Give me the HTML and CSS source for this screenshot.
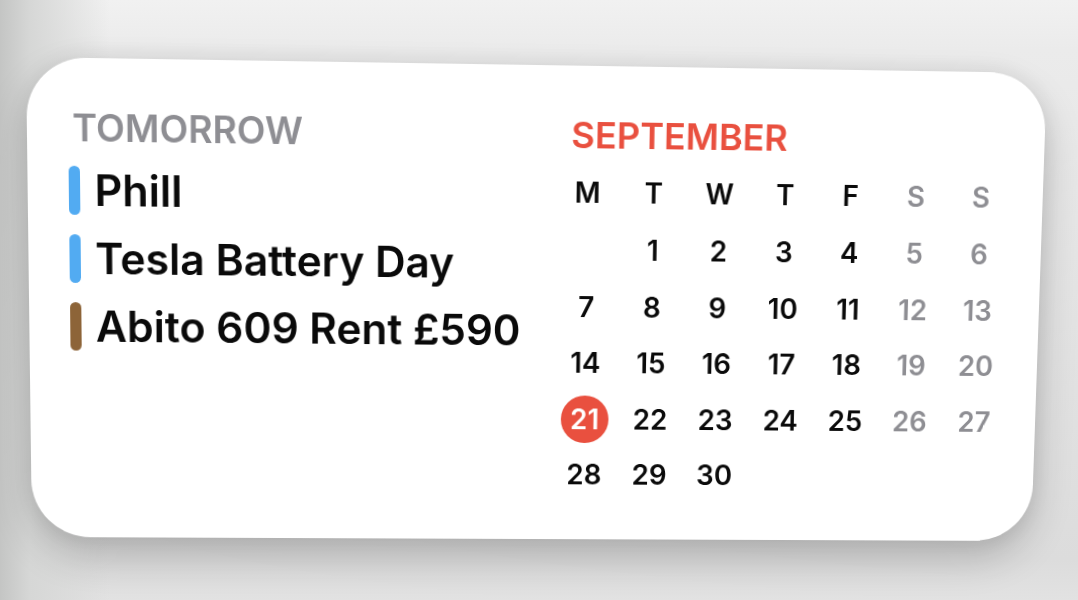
FILE: index.html
```html
<!DOCTYPE html>
<html lang="en">

<head>
    <meta charset="UTF-8">
    <meta name="viewport" content="width=device-width, initial-scale=1.0">
    <title>Calendar widget</title>
    <link rel="stylesheet" href="styles.css">
</head>

<body>
    <div class="widget">
        <section class="agenda">
            <p class="label">TOMORROW</p>
            <ul class="events">
                <li class="event"><span class="bar blue"></span><span class="title">Phill</span></li>
                <li class="event"><span class="bar blue"></span><span class="title">Tesla Battery Day</span></li>
                <li class="event"><span class="bar brown"></span><span class="title">Abito 609 Rent £590</span></li>
            </ul>
        </section>
        <section class="month">
            <p class="month-name">SEPTEMBER</p>
            <div class="weekdays">
                <span>M</span><span>T</span><span>W</span><span>T</span><span>F</span><span>S</span><span>S</span>
            </div>
            <div class="days">
                <span></span><span>1</span><span>2</span><span>3</span><span>4</span><span>5</span><span>6</span>
                <span>7</span><span>8</span><span>9</span><span>10</span><span>11</span><span>12</span><span>13</span>
                <span>14</span><span>15</span><span>16</span><span>17</span><span>18</span><span>19</span><span>20</span>
                <span class="today">21</span><span>22</span><span>23</span><span>24</span><span>25</span><span>26</span><span>27</span>
                <span>28</span><span>29</span><span>30</span>
            </div>
        </section>
    </div>
</body>

</html>
```

FILE: styles.css
```css
html {
    font-family: Inter, "Noto Sans", sans-serif;
}

body {
    margin: 0;
    height: 600px;
    overflow: hidden;
    background:
        linear-gradient(to right, #c4c5c4 0, #d6d7d6 30px, rgba(220, 220, 220, 0) 110px),
        linear-gradient(#f1f1f1 0, #ebebeb 50px, #dcdcdc 560px, #e2e2e2 600px);
}

/* the widget is photographed at a slight angle, so the flat card is warped
   onto the quad seen in the shot */
.widget {
    box-sizing: border-box;
    width: 1010px;
    height: 474px;
    margin: 57px 0 0 26px;
    padding: 50px 30px 0 40px;
    display: flex;
    background: #fff;
    border-radius: 58px;
    box-shadow: 0 18px 40px rgba(0, 0, 0, 0.2), 0 0 26px rgba(0, 0, 0, 0.08);
    transform-origin: 0 0;
    transform: matrix3d(1.036614, 0.016245, 0, 0.0000252,
                        0.012942, 1.035371, 0, 0.0000473,
                        0, 0, 1, 0,
                        0, 0, 0, 1);
}

.agenda {
    flex: 1;
}

.label {
    margin: 0 0 0 4px;
    font-size: 36.5px;
    line-height: 36px;
    font-weight: 600;
    color: #8e8e93;
}

.events {
    list-style: none;
    margin: 19px 0 0;
    padding: 0;
    display: flex;
    flex-direction: column;
    gap: 19px;
}

.event {
    display: flex;
    align-items: center;
    gap: 14px;
    height: 48px;
}

.bar {
    width: 11px;
    height: 48px;
    border-radius: 6px;
}

.bar.blue {
    background-color: #52abf2;
}

.bar.brown {
    background-color: #8d6438;
}

.title {
    font-size: 42px;
    line-height: 48px;
    font-weight: 600;
    color: #0a0a0a;
    white-space: nowrap;
}

.month {
    width: 462px;
}

.month-name {
    margin: 0;
    padding-left: 16px;
    font-size: 36px;
    line-height: 36px;
    font-weight: 600;
    color: #e9503f;
}

.weekdays, .days {
    display: grid;
    grid-template-columns: repeat(7, 66px);
    text-align: center;
    font-size: 28px;
    font-weight: 600;
    color: #0a0a0a;
}

.weekdays {
    margin-top: 10px;
    height: 58px;
    line-height: 58px;
}

.days {
    grid-auto-rows: 56.5px;
    line-height: 56.5px;
}

.weekdays > span:nth-child(n+6),
.days > span:nth-child(7n),
.days > span:nth-child(7n+6) {
    color: #8e8e93;
}

.days > .today {
    justify-self: center;
    align-self: center;
    width: 48px;
    height: 48px;
    line-height: 48px;
    border-radius: 50%;
    background-color: #e9503f;
    color: #fff;
}
```
